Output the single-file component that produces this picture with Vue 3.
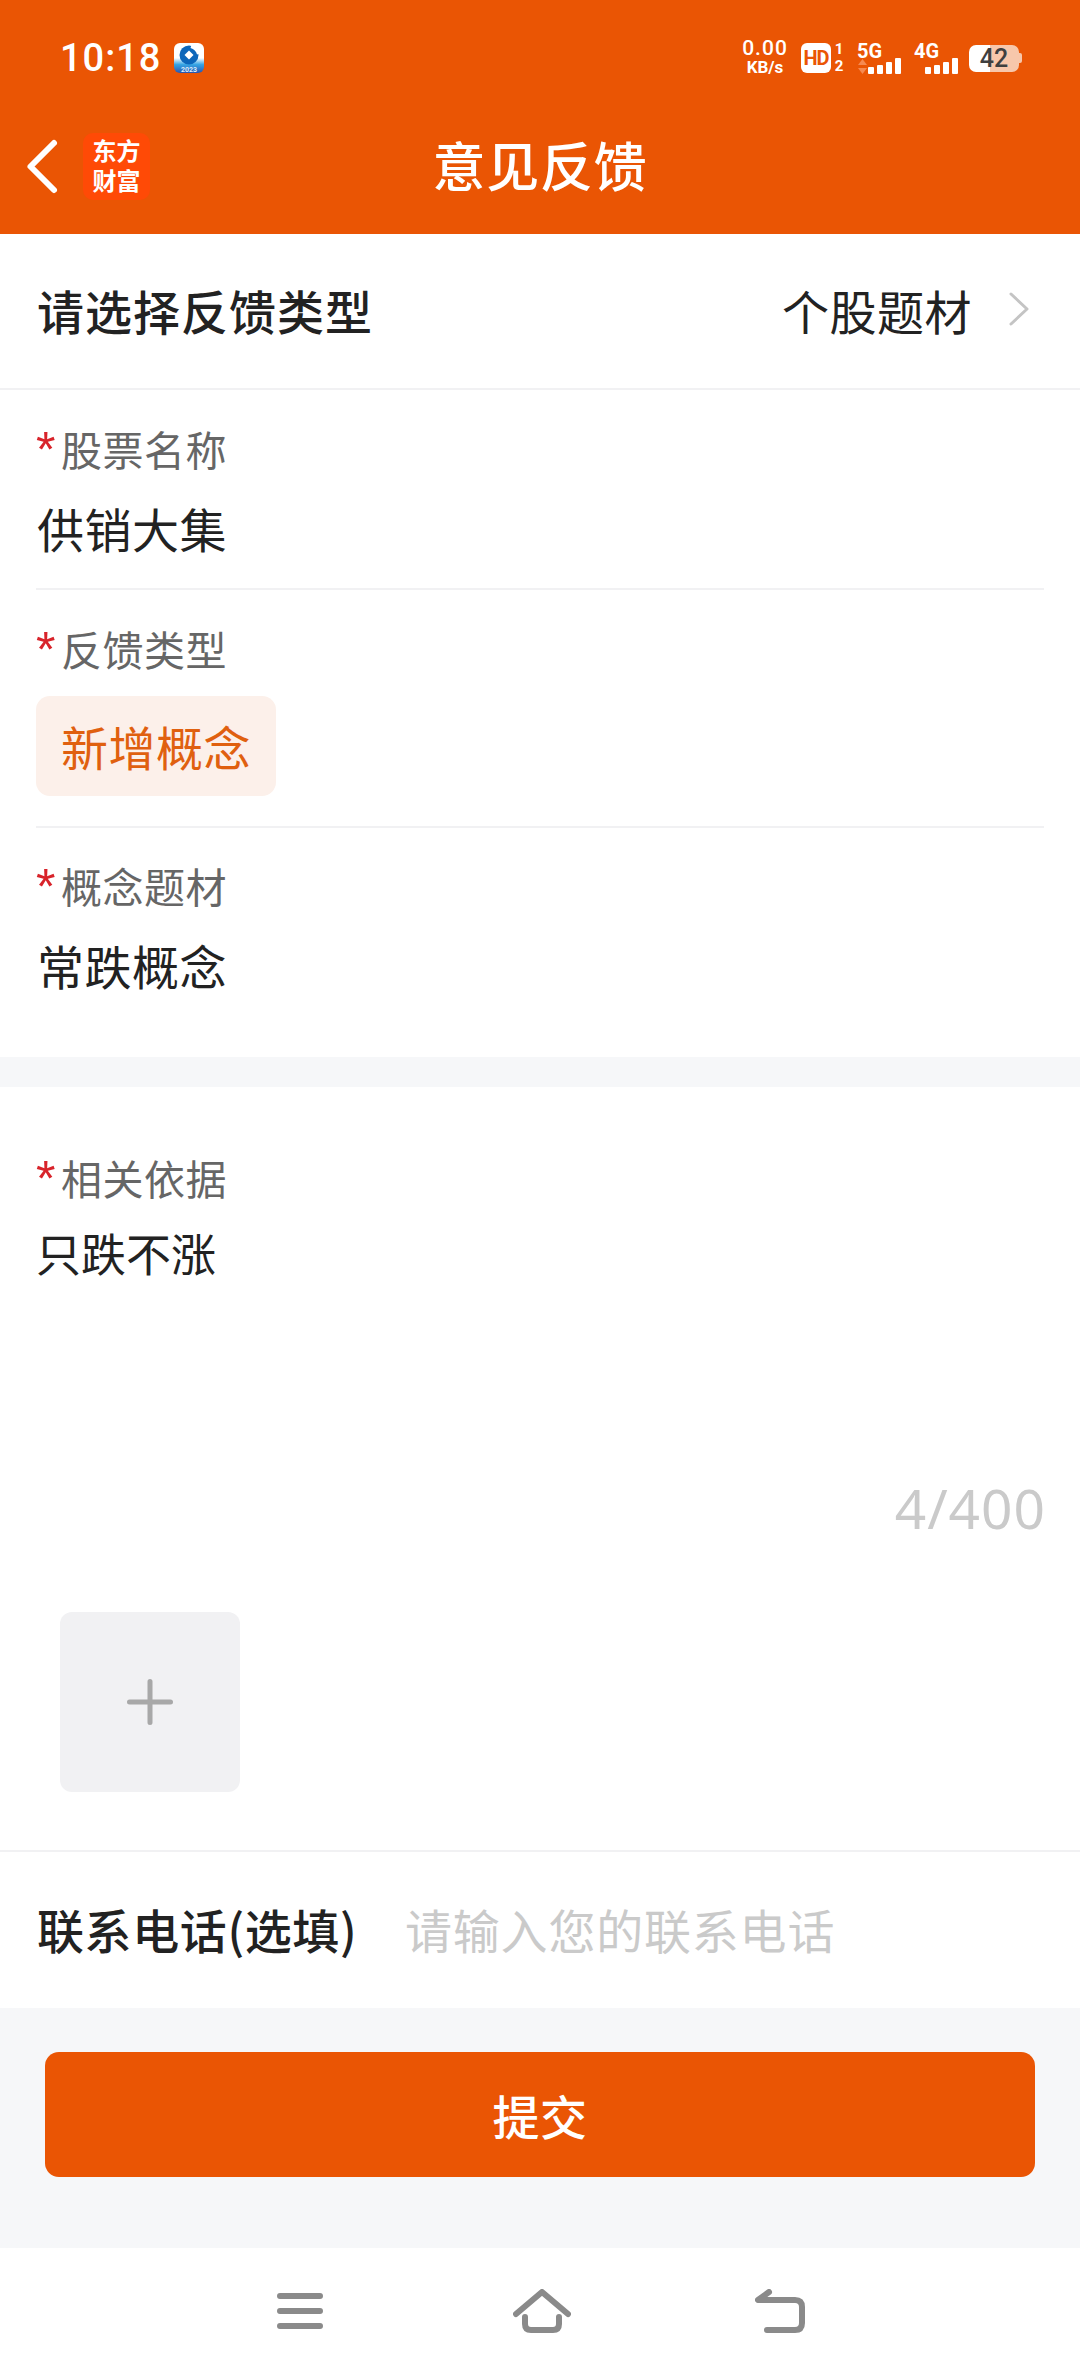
<script setup>
const fields = [
  { label: '股票名称', value: '供销大集' },
  { label: '反馈类型', tag: '新增概念' },
  { label: '概念题材', value: '常跌概念' }
]
const signals = [
  { name: '5G', arrows: true },
  { name: '4G', arrows: false }
]
</script>

<template>
  <div class="page">
    <header class="top">
      <div class="status">
        <div class="status-left">
          <span class="time">10:18</span>
          <svg class="bank" width="30" height="30" viewBox="0 0 30 30">
            <defs>
              <linearGradient id="bankFill" x1="0" y1="0" x2="0" y2="1">
                <stop offset="0.5" stop-color="#ffffff" />
                <stop offset="0.72" stop-color="#35a4e4" />
                <stop offset="1" stop-color="#2a55b0" />
              </linearGradient>
            </defs>
            <rect width="30" height="30" rx="6" fill="url(#bankFill)" />
            <circle cx="15" cy="12" r="9.500" fill="#0c66ba" />
            <path d="M15 7.500L19.500 12L15 16.500L10.500 12Z" fill="#fff" />
            <path d="M17 3.500Q23 5.500 24.500 11" fill="none" stroke="#fff" stroke-width="3" />
            <text x="15" y="28.500" class="bank-year">2023</text>
          </svg>
        </div>
        <div class="status-right">
          <div class="speed"><b>0.00</b><span>KB/s</span></div>
          <div class="hd">HD</div>
          <div class="sim"><span>1</span><span>2</span></div>
          <div v-for="s in signals" :key="s.name" class="signal">
            <span class="net">{{ s.name }}</span>
            <div class="bars-row">
              <svg v-if="s.arrows" class="arrows" width="9" height="15" viewBox="0 0 9 15">
                <path d="M4.500 0L9 6H0Z" fill="#f58a52" />
                <path d="M0 9H9L4.500 15Z" fill="#f58a52" />
              </svg>
              <div class="bars">
                <i class="b1"></i><i class="b2"></i><i class="b3"></i><i class="b4"></i>
              </div>
            </div>
          </div>
          <div class="battery">
            <div class="batt-body"><span>42</span></div>
            <div class="batt-tip"></div>
          </div>
        </div>
      </div>
      <div class="nav">
        <svg class="back" width="36" height="60" viewBox="0 0 36 60">
          <path d="M28 6L4.500 29.500L28 53" fill="none" stroke="#fff" stroke-width="6" stroke-linecap="round" stroke-linejoin="round" />
        </svg>
        <div class="logo"><span>东方</span><span>财富</span></div>
        <h1 class="title">意见反馈</h1>
      </div>
    </header>

    <main class="content">
      <div class="type-row">
        <span class="type-label">请选择反馈类型</span>
        <div class="type-pick">
          <span>个股题材</span>
          <svg width="22" height="36" viewBox="0 0 22 36">
            <path d="M3 3L19 18L3 33" fill="none" stroke="#c4c4c4" stroke-width="3" stroke-linecap="round" stroke-linejoin="round" />
          </svg>
        </div>
      </div>

      <section class="fields">
        <div v-for="f in fields" :key="f.label" class="field">
          <div class="label"><em>*</em>{{ f.label }}</div>
          <div v-if="f.value" class="value">{{ f.value }}</div>
          <div v-else class="tag">{{ f.tag }}</div>
        </div>
      </section>

      <div class="gap"></div>

      <section class="basis">
        <div class="label"><em>*</em>相关依据</div>
        <div class="basis-text">只跌不涨</div>
        <div class="count">4/400</div>
        <div class="upload">
          <svg width="46" height="46" viewBox="0 0 46 46">
            <path d="M2.500 23H43.500M23 2.500V43.500" stroke="#a8a8a8" stroke-width="5" stroke-linecap="round" />
          </svg>
        </div>
      </section>

      <div class="phone-row">
        <span class="phone-label">联系电话(选填)</span>
        <span class="phone-hint">请输入您的联系电话</span>
      </div>

      <div class="submit-wrap">
        <button type="button" class="submit">提交</button>
      </div>
    </main>

    <footer class="sys-nav">
      <svg width="46" height="36" viewBox="0 0 46 36">
        <path d="M3 3H43M3 18H43M3 33H43" stroke="#8a8a8a" stroke-width="6" stroke-linecap="round" />
      </svg>
      <svg class="home" width="58" height="44" viewBox="0 0 58 44">
        <path d="M3 25L29 3L55 25" fill="none" stroke="#8a8a8a" stroke-width="6" stroke-linecap="round" stroke-linejoin="round" />
        <path d="M12 28V35Q12 41 18 41H40Q46 41 46 35V28" fill="none" stroke="#8a8a8a" stroke-width="6" stroke-linecap="round" />
      </svg>
      <svg class="ret" width="50" height="44" viewBox="0 0 50 44">
        <path d="M14 3L3 11H40Q47 11 47 18V34Q47 41 40 41H12" fill="none" stroke="#8a8a8a" stroke-width="6" stroke-linecap="round" stroke-linejoin="round" />
      </svg>
    </footer>
  </div>
</template>

<style>
html, body {
  margin: 0;
  background: #fff;
}
</style>

<style scoped>
.page {
  width: 1080px;
  height: 2376px;
  display: flex;
  flex-direction: column;
  font-family: "Noto Sans CJK SC", "Noto Sans", sans-serif;
  color: #222;
  overflow: hidden;
}
.top {
  height: 234px;
  background: #ea5504;
  color: #fff;
  flex-shrink: 0;
}
.status {
  height: 116px;
  box-sizing: border-box;
  padding: 0 58px 0 60px;
  display: flex;
  justify-content: space-between;
  align-items: center;
}
.status-left {
  display: flex;
  align-items: center;
  gap: 13px;
}
.bank-year {
  font-family: Roboto, sans-serif;
  font-size: 7px;
  font-weight: 700;
  fill: #dcecfb;
  text-anchor: middle;
}
.time {
  font-family: Roboto, sans-serif;
  font-size: 38px;
  font-weight: 500;
  letter-spacing: 1px;
}
.status-right {
  display: flex;
  align-items: center;
  font-family: Roboto, sans-serif;
  font-weight: 700;
}
.speed {
  display: flex;
  flex-direction: column;
  align-items: center;
  line-height: 19px;
  width: 50px;
}
.speed b {
  font-size: 21px;
  letter-spacing: 1px;
  font-weight: 500;
}
.speed span {
  font-size: 17px;
}
.hd {
  margin-left: 11px;
  width: 30px;
  height: 30px;
  background: #fff;
  color: #ea5504;
  border-radius: 6px;
  font-size: 20px;
  line-height: 30px;
  text-align: center;
  letter-spacing: -1px;
}
.sim {
  display: flex;
  flex-direction: column;
  align-items: center;
  width: 14px;
  margin-left: 1px;
  font-size: 15px;
  line-height: 17px;
}
.signal {
  margin-left: 11px;
  width: 44px;
  display: flex;
  flex-direction: column;
}
.signal + .signal {
  margin-left: 13px;
}
.net {
  font-size: 20px;
  line-height: 16px;
}
.bars-row {
  display: flex;
  align-items: flex-end;
  justify-content: flex-end;
  gap: 1px;
  margin-top: -1px;
  height: 16px;
}
.bars {
  display: flex;
  align-items: flex-end;
  gap: 3px;
}
.bars i {
  width: 6px;
  background: #fff;
  border-radius: 1px;
}
.bars .b1 { height: 7px; }
.bars .b2 { height: 9px; }
.bars .b3 { height: 12px; }
.bars .b4 { height: 16px; }
.battery {
  margin-left: 11px;
  display: flex;
  align-items: center;
}
.batt-body {
  width: 50px;
  height: 27px;
  border-radius: 7px;
  background: linear-gradient(90deg, #fff 42%, #f7c7ab 42%);
  color: #3f3f3f;
  font-size: 25px;
  font-weight: 500;
  line-height: 27px;
  text-align: center;
}
.batt-tip {
  width: 3px;
  height: 10px;
  background: #f7c7ab;
  border-radius: 0 2px 2px 0;
}
.nav {
  height: 118px;
  position: relative;
  display: flex;
  align-items: center;
  justify-content: center;
}
.back {
  position: absolute;
  left: 26px;
  top: 21px;
}
.logo {
  position: absolute;
  left: 83px;
  top: 17px;
  width: 67px;
  height: 67px;
  box-sizing: border-box;
  padding-bottom: 3px;
  border-radius: 10px;
  background: #ff4a06;
  display: flex;
  flex-direction: column;
  align-items: center;
  justify-content: center;
  font-size: 24px;
  font-weight: 700;
  line-height: 30px;
}
.title {
  margin: 0;
  font-size: 53px;
  font-weight: 500;
  letter-spacing: 0.8px;
  position: relative;
  top: -11px;
}
.content {
  flex: 1;
  display: flex;
  flex-direction: column;
  background: #fff;
}
.type-row {
  height: 156px;
  box-sizing: border-box;
  padding: 0 50px 4px 37px;
  display: flex;
  justify-content: space-between;
  align-items: center;
  border-bottom: 2px solid #f1f1f3;
}
.type-label {
  font-size: 47px;
  font-weight: 500;
  letter-spacing: 1px;
}
.type-pick {
  display: flex;
  align-items: center;
  gap: 36px;
  font-size: 47px;
  letter-spacing: 0.5px;
}
.fields {
  padding: 0 36px;
}
.field {
  box-sizing: border-box;
  border-bottom: 2px solid #f1f1f3;
}
.field:nth-child(1) {
  height: 200px;
  padding-top: 30px;
}
.field:nth-child(2) {
  height: 238px;
  padding-top: 30px;
}
.field:nth-child(3) {
  height: 229px;
  padding-top: 29px;
  border-bottom: 0;
}
.label {
  font-size: 41px;
  line-height: 56px;
  color: #666;
  letter-spacing: 0.5px;
  display: flex;
  align-items: flex-start;
}
.label em {
  font-style: normal;
  font-size: 50px;
  line-height: 60px;
  height: 56px;
  width: 25px;
  flex-shrink: 0;
  color: #d8232a;
  font-family: "Liberation Sans", sans-serif;
}
.value {
  margin-top: 20px;
  padding-left: 1px;
  font-size: 47px;
  line-height: 64px;
  letter-spacing: 0.5px;
}
.tag {
  margin-top: 20px;
  width: 240px;
  height: 100px;
  border-radius: 14px;
  background: #fcf0ea;
  color: #e0600f;
  font-size: 47px;
  line-height: 100px;
  text-align: center;
  letter-spacing: 0.5px;
}
.gap {
  height: 30px;
  background: #f6f7f9;
  flex-shrink: 0;
}
.basis {
  box-sizing: border-box;
  height: 765px;
  padding: 62px 36px 0;
  display: flex;
  flex-direction: column;
  border-bottom: 2px solid #f1f1f3;
}
.basis-text {
  margin-top: 16px;
  font-size: 45px;
  line-height: 64px;
}
.count {
  margin-top: 188px;
  margin-right: -2px;
  align-self: flex-end;
  font-family: "Noto Sans", sans-serif;
  font-size: 55px;
  line-height: 70px;
  color: #cacaca;
  letter-spacing: 1px;
}
.upload {
  margin: 69px 0 0 24px;
  width: 180px;
  height: 180px;
  border-radius: 12px;
  background: #f1f1f3;
  display: flex;
  align-items: center;
  justify-content: center;
}
.phone-row {
  height: 156px;
  box-sizing: border-box;
  padding: 0 37px 4px;
  display: flex;
  align-items: center;
}
.phone-label {
  width: 368px;
  font-size: 47px;
  font-weight: 500;
  letter-spacing: 0.6px;
}
.phone-hint {
  font-size: 47px;
  color: #cacaca;
  letter-spacing: 0.8px;
}
.submit-wrap {
  flex: 1;
  background: #f6f7f9;
  padding: 44px 45px 0;
}
.submit {
  display: block;
  width: 100%;
  height: 125px;
  border: 0;
  border-radius: 14px;
  background: #ea5504;
  color: #fff;
  font-family: inherit;
  font-size: 47px;
  font-weight: 500;
  letter-spacing: 0.5px;
}
.sys-nav {
  height: 128px;
  flex-shrink: 0;
  box-sizing: border-box;
  padding: 0 0 2px 277px;
  display: flex;
  align-items: center;
  background: #fff;
}
.home {
  margin-left: 190px;
}
.ret {
  margin-left: 184px;
}
</style>
